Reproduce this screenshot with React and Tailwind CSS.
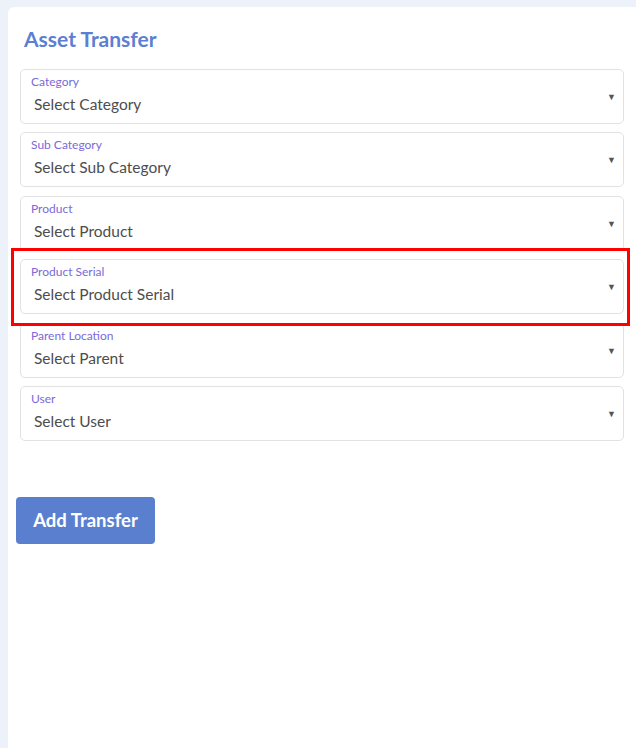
const fields = [
  { label: 'Category', placeholder: 'Select Category' },
  { label: 'Sub Category', placeholder: 'Select Sub Category' },
  { label: 'Product', placeholder: 'Select Product' },
  { label: 'Product Serial', placeholder: 'Select Product Serial', highlight: true },
  { label: 'Parent Location', placeholder: 'Select Parent' },
  { label: 'User', placeholder: 'Select User' },
]

const SelectField = ({ label, placeholder, highlight }) => (
  <div className="relative">
    <div className="relative h-[55px] rounded-[5px] border border-[#e2e2e2] bg-white pl-[10px]">
      <div className="pt-[4px] text-[12px] leading-[16px] text-[#7a6ad8]">{label}</div>
      <div className="pl-[3px] pt-[4px] text-[15.5px] leading-[20px] text-[#4d4d4d]">{placeholder}</div>
      <span className="absolute right-[7px] top-[20px] text-[9px] text-[#555]">▼</span>
    </div>
    {highlight && (
      <div className="pointer-events-none absolute -left-[9px] -right-[6px] -top-[11px] -bottom-[12px] z-10 border-[3px] border-[#ff0000]" />
    )}
  </div>
)

export default function App() {
  return (
    <div
      className="min-h-[748px] bg-[#edf1f9] pl-[8px] pt-[7px]"
      style={{ fontFamily: 'Lato, "Open Sans", sans-serif' }}
    >
      <div className="min-h-[741px] rounded-tl-[6px] bg-white pl-[12px] pr-[12px]">
        <h1 className="pl-[4px] pt-[19px] text-[21px] font-bold leading-[26px] text-[#5b7fd2]">
          Asset Transfer
        </h1>
        <div className="mt-[17px] flex flex-col gap-[8.4px]">
          {fields.map((f) => (
            <SelectField key={f.label} {...f} />
          ))}
        </div>
        <button className="-ml-[4px] mt-[56px] h-[47px] w-[139px] rounded-[4px] bg-[#5b7fcf] text-[18.5px] font-bold text-white">
          Add Transfer
        </button>
      </div>
    </div>
  )
}
